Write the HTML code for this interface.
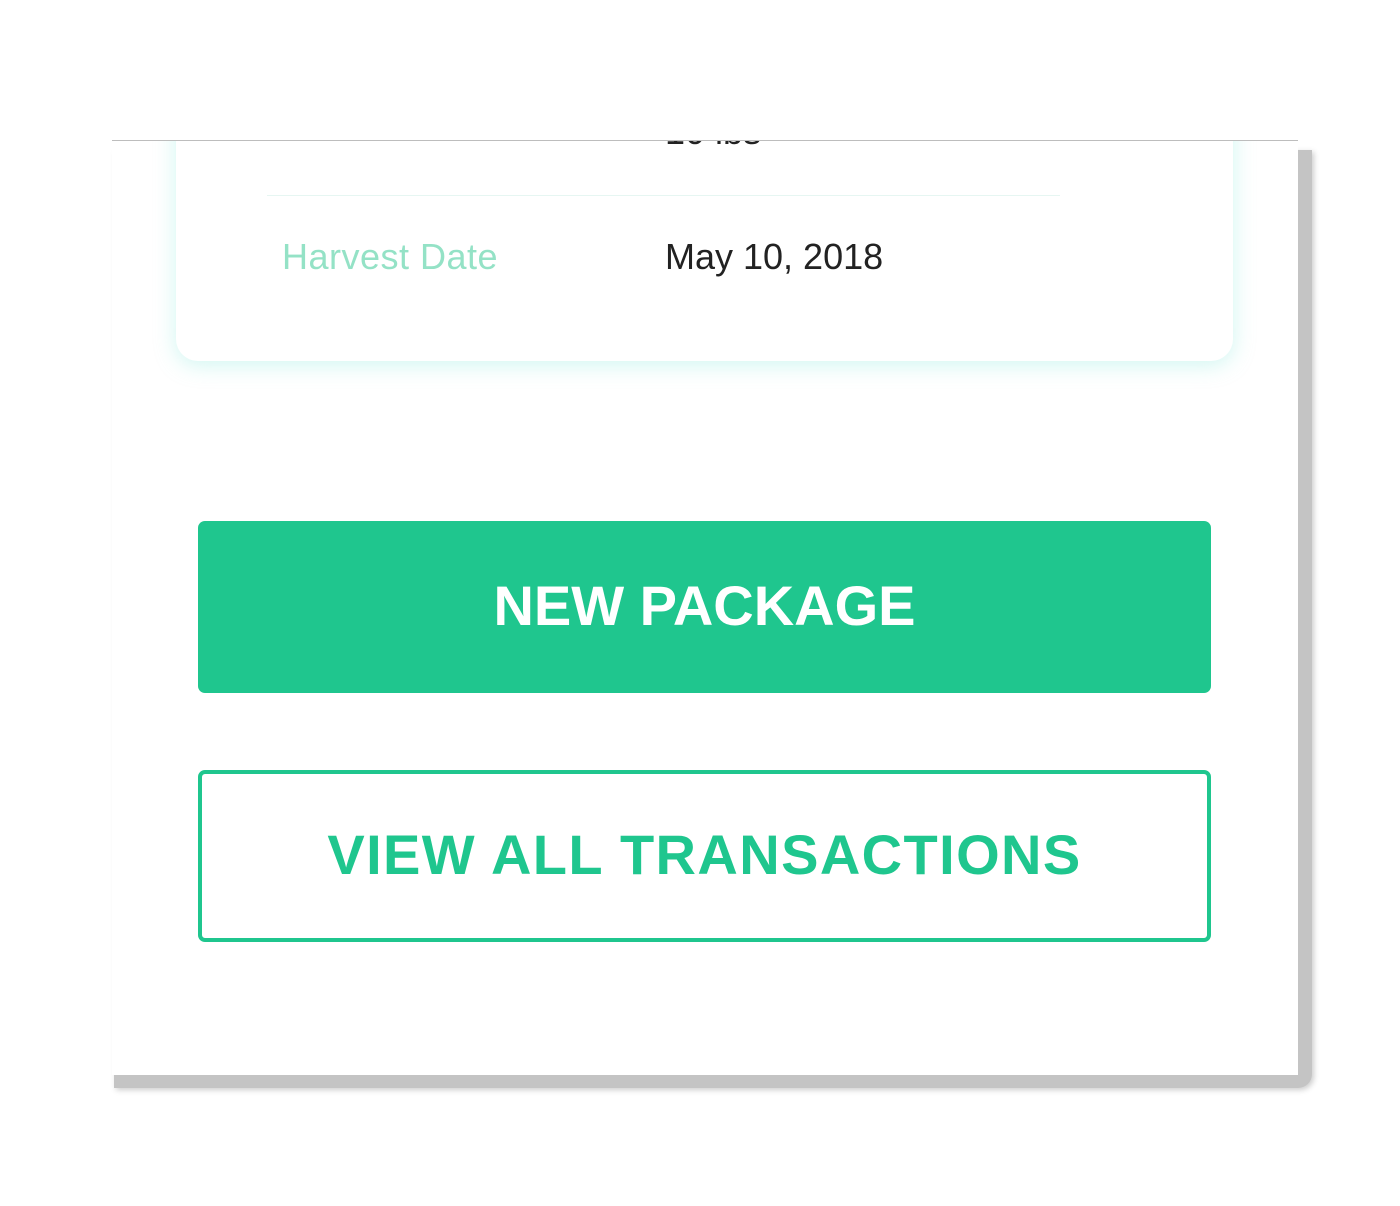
<!DOCTYPE html>
<html><head><meta charset="utf-8"><style>
html,body{margin:0;padding:0;background:#fff;width:1400px;height:1206px;overflow:hidden;font-family:"Liberation Sans",sans-serif;}
.shadow{position:absolute;left:114px;top:150px;width:1198px;height:938px;background:#c4c4c4;border-radius:0 0 14px 0;box-shadow:2px 2px 6px #ccc;}
.panel{position:absolute;left:112px;top:140px;width:1186px;height:934px;background:#fff;border-top:1px solid #bdbdbd;overflow:hidden;}
.card{position:absolute;left:64px;top:-60px;width:1057px;height:280px;background:#fff;border-radius:22px;box-shadow:0 4px 22px rgba(120,230,215,0.35);}
.top{position:absolute;left:553px;top:-30px;font-size:36px;color:#222;}
.div{position:absolute;left:155px;top:54px;width:793px;height:1px;background:#e6f6f2;}
.lab{position:absolute;left:170px;top:95px;font-size:36px;color:#94e2c6;letter-spacing:0.5px;}
.val{position:absolute;left:553px;top:95px;font-size:36px;color:#222;}
.btn{position:absolute;left:86px;width:1013px;height:172px;border-radius:7px;box-sizing:border-box;display:flex;align-items:center;justify-content:center;font-weight:bold;font-size:56px;padding-bottom:4px;}
.b1{top:380px;background:#1fc68e;color:#fff;}
.b2{top:629px;border:4px solid #1fc68e;color:#1fc68e;letter-spacing:1.4px;}
</style></head><body>
<div class="shadow"></div>
<div class="panel">
 <div class="card"></div>
 <div class="top">10 lbs</div>
 <div class="div"></div>
 <div class="lab">Harvest Date</div>
 <div class="val">May 10, 2018</div>
 <div class="btn b1">NEW PACKAGE</div>
 <div class="btn b2">VIEW ALL TRANSACTIONS</div>
</div>
</body></html>
